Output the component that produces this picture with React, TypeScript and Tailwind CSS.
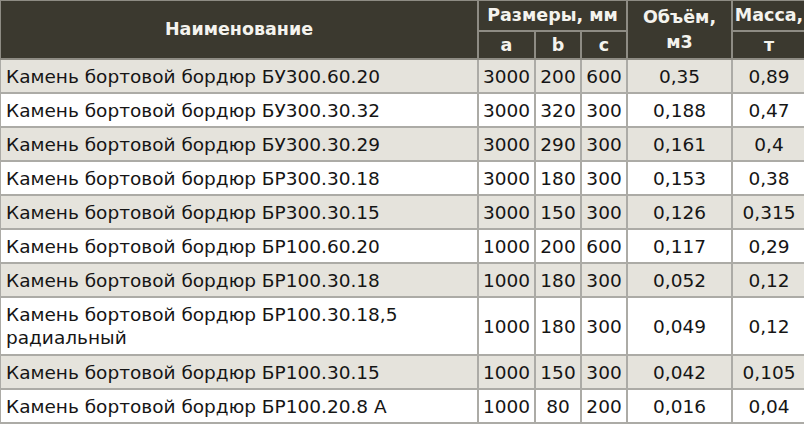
import React from "react";

const rows: { name: string; a: string; b: string; c: string; v: string; m: string; tall?: boolean }[] = [
  { name: "Камень бортовой бордюр БУ300.60.20", a: "3000", b: "200", c: "600", v: "0,35", m: "0,89" },
  { name: "Камень бортовой бордюр БУ300.30.32", a: "3000", b: "320", c: "300", v: "0,188", m: "0,47" },
  { name: "Камень бортовой бордюр БУ300.30.29", a: "3000", b: "290", c: "300", v: "0,161", m: "0,4" },
  { name: "Камень бортовой бордюр БР300.30.18", a: "3000", b: "180", c: "300", v: "0,153", m: "0,38" },
  { name: "Камень бортовой бордюр БР300.30.15", a: "3000", b: "150", c: "300", v: "0,126", m: "0,315" },
  { name: "Камень бортовой бордюр БР100.60.20", a: "1000", b: "200", c: "600", v: "0,117", m: "0,29" },
  { name: "Камень бортовой бордюр БР100.30.18", a: "1000", b: "180", c: "300", v: "0,052", m: "0,12" },
  { name: "", a: "1000", b: "180", c: "300", v: "0,049", m: "0,12", tall: true },
  { name: "Камень бортовой бордюр БР100.30.15", a: "1000", b: "150", c: "300", v: "0,042", m: "0,105" },
  { name: "Камень бортовой бордюр БР100.20.8 А", a: "1000", b: "80", c: "200", v: "0,016", m: "0,04" },
];

export default function App() {
  const th = "bg-[#3b392f] text-[#f4f3ee] font-bold text-[17.5px] border-2 border-[#8e8c84] text-center align-middle p-0";
  const td = "border-2 border-[#acaba6] text-center align-middle p-0";
  return (
    <div className="w-[804px] h-[424px] overflow-hidden bg-white font-['DejaVu_Sans',Verdana,sans-serif] text-[#151515]">
      <table className="table-fixed border-collapse w-[806px] -ml-[1px] -mt-[1px] text-[18.5px] leading-[23px]">
        <colgroup>
          <col className="w-[478px]" />
          <col className="w-[57px]" />
          <col className="w-[46px]" />
          <col className="w-[46px]" />
          <col className="w-[105px]" />
          <col className="w-[74px]" />
        </colgroup>
        <thead>
          <tr className="h-[31px]">
            <th rowSpan={2} className={th}>Наименование</th>
            <th colSpan={3} className={th}>Размеры, мм</th>
            <th rowSpan={2} className={`${th} leading-[25px]`}>
              Объём,
              <br />
              м3
            </th>
            <th className={`${th} whitespace-nowrap`}>Масса,</th>
          </tr>
          <tr className="h-[28px]">
            <th className={th}>a</th>
            <th className={th}>b</th>
            <th className={th}>c</th>
            <th className={th}>т</th>
          </tr>
        </thead>
        <tbody>
          {rows.map((r, i) => (
            <tr key={i} className={`${r.tall ? "h-[58px]" : "h-[34px]"} ${i % 2 === 0 ? "bg-[#e5e3dc]" : "bg-white"}`}>
              <td className={`${td} text-left pl-[5px] whitespace-nowrap`}>
                {r.tall ? (
                  <>
                    Камень бортовой бордюр БР100.30.18,5
                    <br />
                    радиальный
                  </>
                ) : (
                  r.name
                )}
              </td>
              <td className={td}>{r.a}</td>
              <td className={td}>{r.b}</td>
              <td className={td}>{r.c}</td>
              <td className={td}>{r.v}</td>
              <td className={td}>{r.m}</td>
            </tr>
          ))}
        </tbody>
      </table>
    </div>
  );
}
